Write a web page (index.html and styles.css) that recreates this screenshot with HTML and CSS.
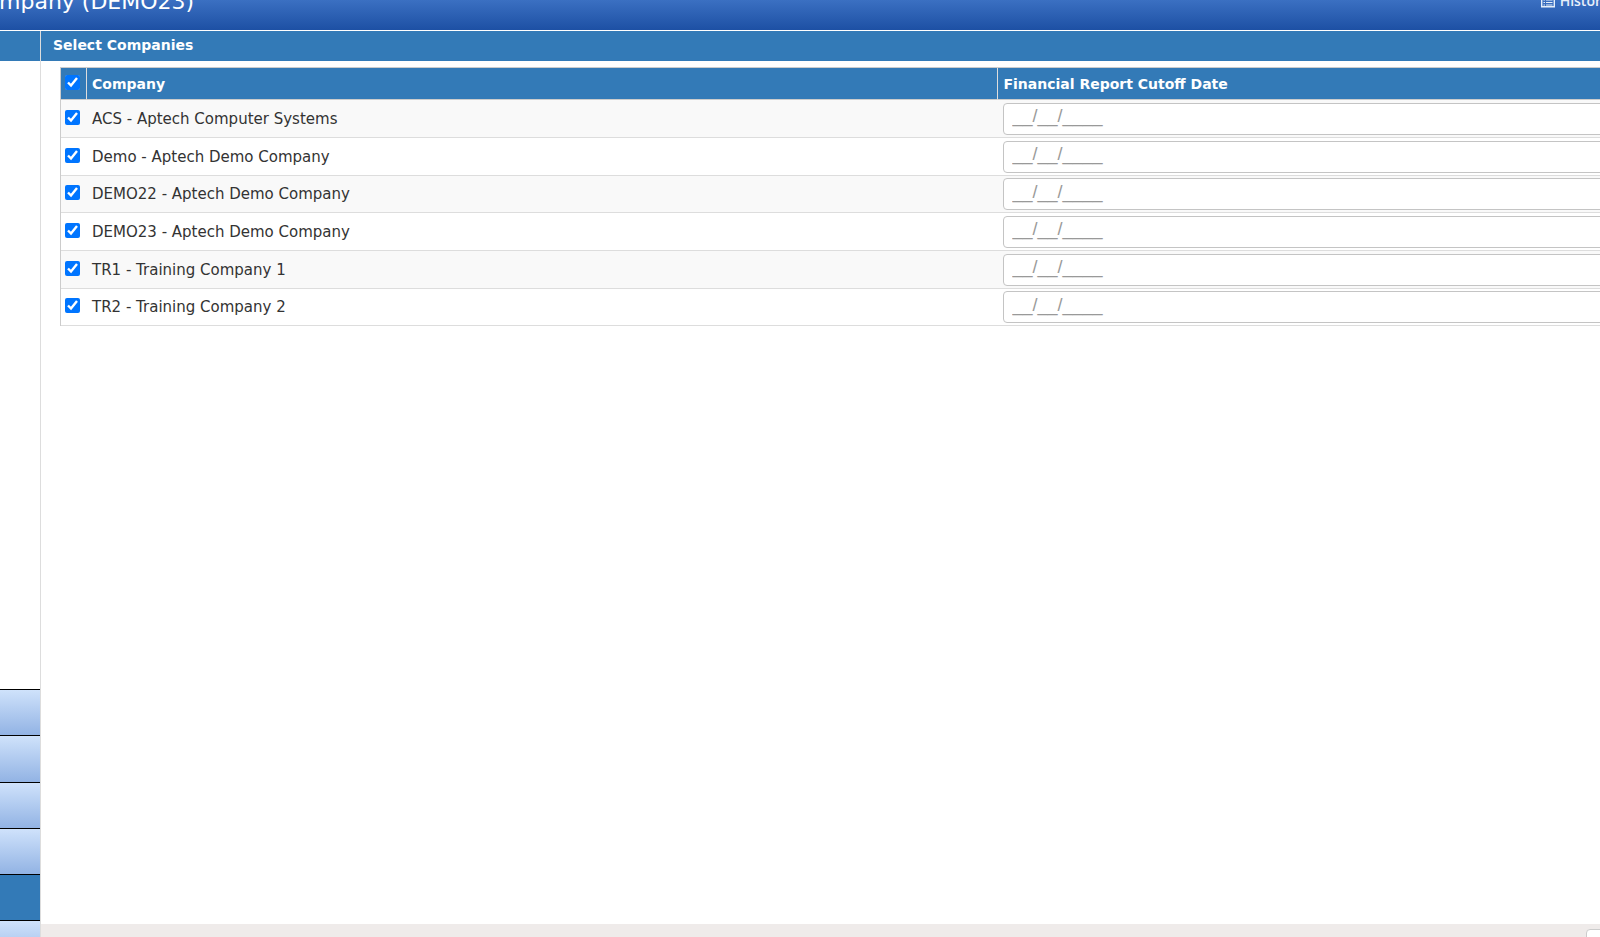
FILE: index.html
```html
<!DOCTYPE html>
<html lang="en">
<head>
<meta charset="utf-8">
<title>Select Companies</title>
<link rel="stylesheet" href="styles.css">
</head>
<body>
<header class="topbar">
  <h1 class="topbar-title">mpany (DEMO23)</h1>
  <a class="topbar-link" href="#">
    <svg class="icon" viewBox="0 0 14 14" aria-hidden="true"><path fill="none" stroke="currentColor" stroke-width="1.4" d="M.7 1.2h12.6v11.6H.7z"/><path fill="currentColor" d="M1 1h12v3H1zM2.500 5.500h1.500v1h-1.500zM5 5.500h6.500v1H5zM2.500 8h1.500v1h-1.500zM5 8h6.500v1H5zM2.500 10.500h1.500v1h-1.500zM5 10.500h6.500v1H5z"/></svg>
    <span>Histor</span>
  </a>
</header>
<div class="layout">
  <aside class="sidebar">
    <div class="sidebar-head"></div>
    <nav class="sidebar-nav" aria-label="Modules">
      <button class="nav-item" type="button"></button>
      <button class="nav-item nav-tall" type="button"></button>
      <button class="nav-item" type="button"></button>
      <button class="nav-item" type="button"></button>
      <button class="nav-item nav-active" type="button"></button>
      <button class="nav-item" type="button"></button>
    </nav>
  </aside>
  <main class="panel">
    <h2 class="panel-head">Select Companies</h2>
    <div class="panel-body">
      <table class="grid">
        <thead>
          <tr><th class="col-check"><input class="check" type="checkbox" aria-label="Select all" checked></th><th class="col-name">Company</th><th>Financial Report Cutoff Date</th></tr>
        </thead>
        <tbody>
          <tr><td><input class="check" type="checkbox" id="c1" checked></td><td><label for="c1">ACS - Aptech Computer Systems</label></td><td><input class="date" type="text" placeholder="__/__/____" aria-label="Cutoff date, ACS"></td></tr>
          <tr><td><input class="check" type="checkbox" id="c2" checked></td><td><label for="c2">Demo - Aptech Demo Company</label></td><td><input class="date" type="text" placeholder="__/__/____" aria-label="Cutoff date, Demo"></td></tr>
          <tr><td><input class="check" type="checkbox" id="c3" checked></td><td><label for="c3">DEMO22 - Aptech Demo Company</label></td><td><input class="date" type="text" placeholder="__/__/____" aria-label="Cutoff date, DEMO22"></td></tr>
          <tr><td><input class="check" type="checkbox" id="c4" checked></td><td><label for="c4">DEMO23 - Aptech Demo Company</label></td><td><input class="date" type="text" placeholder="__/__/____" aria-label="Cutoff date, DEMO23"></td></tr>
          <tr><td><input class="check" type="checkbox" id="c5" checked></td><td><label for="c5">TR1 - Training Company 1</label></td><td><input class="date" type="text" placeholder="__/__/____" aria-label="Cutoff date, TR1"></td></tr>
          <tr><td><input class="check" type="checkbox" id="c6" checked></td><td><label for="c6">TR2 - Training Company 2</label></td><td><input class="date" type="text" placeholder="__/__/____" aria-label="Cutoff date, TR2"></td></tr>
        </tbody>
      </table>
    </div>
    <footer class="panel-foot"><button class="foot-button" type="button"></button></footer>
  </main>
</div>
</body>
</html>
```
FILE: styles.css
```css
* { box-sizing: border-box; }

body {
  margin: 0;
  height: 100vh;
  display: flex;
  flex-direction: column;
  overflow: hidden;
  background: #fff;
  color: #333;
  font: 14px/20px Verdana, "DejaVu Sans", sans-serif;
}

.topbar {
  flex: none;
  display: flex;
  justify-content: space-between;
  align-items: flex-start;
  height: 31px;
  border-bottom: 1px solid #fff;
  background: linear-gradient(#3b70c2, #1d50a4);
  color: #fff;
  overflow: hidden;
}

.topbar-title {
  margin: -12px 0 0 -1px;
  font-size: 22px;
  line-height: 28px;
  font-weight: 400;
}

.topbar-link {
  display: flex;
  align-items: center;
  gap: 5px;
  margin: -9px -1px 0 0;
  color: #e6effa;
  font: 600 14px/20px "Open Sans", "Noto Sans", sans-serif;
  text-decoration: none;
}

.icon { width: 14px; height: 14px; }

.layout { flex: 1; display: flex; min-height: 0; }

.sidebar {
  flex: none;
  width: 41px;
  display: flex;
  flex-direction: column;
  justify-content: space-between;
  border-right: 1px solid #ddd;
}

.sidebar-head { height: 30px; background: #337ab7; }

.sidebar-nav {
  display: flex;
  flex-direction: column;
  margin-bottom: -29px;
}

.nav-item {
  height: 46px;
  padding: 0;
  border: 0;
  border-top: 1px solid #000;
  background: linear-gradient(#cfe2fb, #92b3e4);
}

.nav-tall { height: 47px; }

.nav-active { background: #337ab7; }

.panel {
  flex: 1;
  min-width: 0;
  display: flex;
  flex-direction: column;
  overflow: hidden;
}

.panel-head {
  flex: none;
  height: 30px;
  margin: 0;
  padding-left: 12px;
  background: #337ab7;
  color: #fff;
  font-size: 14px;
  line-height: 28px;
}

.panel-body { flex: 1; padding: 6px 0 0 19px; }

.grid {
  width: calc(100% + 20px);
  table-layout: fixed;
  border-collapse: separate;
  border-spacing: 0;
  border: 1px solid #ccc;
  border-bottom: 0;
}

.grid th {
  height: 32px;
  padding: 0 5px;
  border-right: 1px solid #ddd;
  border-bottom: 1px solid #ccc;
  background: #337ab7;
  color: #fff;
  text-align: left;
}

.grid .col-check { width: 26px; padding: 0 4px; }

.col-name { width: 58.5%; }

.grid td {
  height: 38px;
  padding: 0 5px;
  border-bottom: 1px solid #ddd;
  font-size: 15px;
}

.grid td:first-child { padding: 0 4px; }

.grid tr:nth-child(3n) td { height: 37px; }

.grid tbody tr:nth-child(odd) { background: #f9f9f9; }

.check {
  display: block;
  width: 15px;
  height: 15px;
  margin: 0 0 3px;
  accent-color: #0075ff;
}

.date {
  display: block;
  width: 100%;
  height: 32px;
  padding: 0 8px 4px;
  border: 1px solid #c4c4c4;
  border-radius: 4px;
  background: #fff;
  color: #555;
  font: 18px "Liberation Sans", Arial, sans-serif;
}

.date::placeholder { color: #999; opacity: 1; }

.panel-foot {
  flex: none;
  display: flex;
  justify-content: flex-end;
  height: 13px;
  padding-top: 5px;
  background: #efebea;
}

.foot-button {
  width: 80px;
  height: 32px;
  margin-right: -66px;
  border: 1px solid #ccc;
  border-radius: 4px;
  background: #fff;
}
```
